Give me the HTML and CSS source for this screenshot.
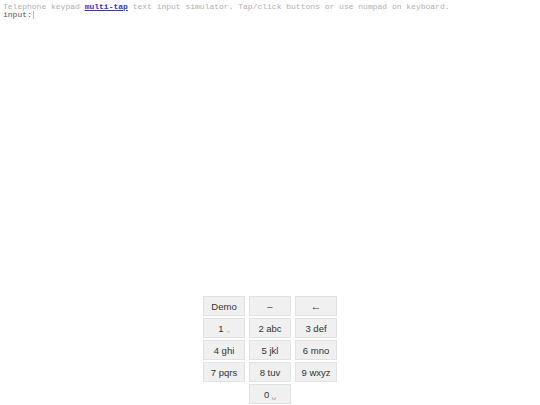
FILE: index.html
```html
<!DOCTYPE html>
<html>
<head>
<meta charset="utf-8">
<link rel="stylesheet" href="styles.css">
</head>
<body>
<div class="page">
  <div class="intro">Telephone keypad <a class="link" href="#">multi-tap</a> text input simulator. Tap/click buttons or use numpad on keyboard.</div>
  <div class="input-line">input:<span class="caret"></span></div>
  <div class="keypad">
    <button class="key">Demo</button>
    <button class="key">–</button>
    <button class="key arrow">←</button>
    <button class="key">1 <span class="sub">.,</span></button>
    <button class="key">2 abc</button>
    <button class="key">3 def</button>
    <button class="key">4 ghi</button>
    <button class="key">5 jkl</button>
    <button class="key">6 mno</button>
    <button class="key">7 pqrs</button>
    <button class="key">8 tuv</button>
    <button class="key">9 wxyz</button>
    <button class="key zero">0 <span class="sub">␣</span></button>
  </div>
</div>
</body>
</html>
```

FILE: styles.css
```css
html, body {
  margin: 0;
  padding: 0;
  background: #fff;
}
.page {
  height: 405px;
  box-sizing: border-box;
  padding: 3px 3px 1px 3px;
  display: flex;
  flex-direction: column;
  font-family: "Liberation Mono", "DejaVu Sans Mono", monospace;
  font-size: 8px;
  line-height: 8px;
}
.intro {
  color: #b0b0b0;
  white-space: nowrap;
}
.link {
  color: #3333cc;
  font-weight: bold;
  text-decoration: underline;
}
.input-line {
  color: #555;
  display: flex;
  align-items: center;
}
.caret {
  display: inline-block;
  width: 1px;
  height: 8px;
  background: #bbb;
  margin-left: 1px;
}
.keypad {
  margin-top: auto;
  align-self: center;
  display: grid;
  grid-template-columns: 42px 42px 42px;
  column-gap: 4px;
  row-gap: 2px;
}
.key {
  width: 42px;
  height: 20px;
  margin: 0;
  padding: 0;
  box-sizing: border-box;
  background: #f0f0f0;
  border: 1px solid #e2e2e2;
  border-radius: 0;
  font-family: "Liberation Sans", Arial, sans-serif;
  font-size: 9.5px;
  color: #333;
}
.arrow {
  font-size: 11px;
}
.sub {
  font-size: 6px;
}
.zero {
  grid-column: 2;
}
```
